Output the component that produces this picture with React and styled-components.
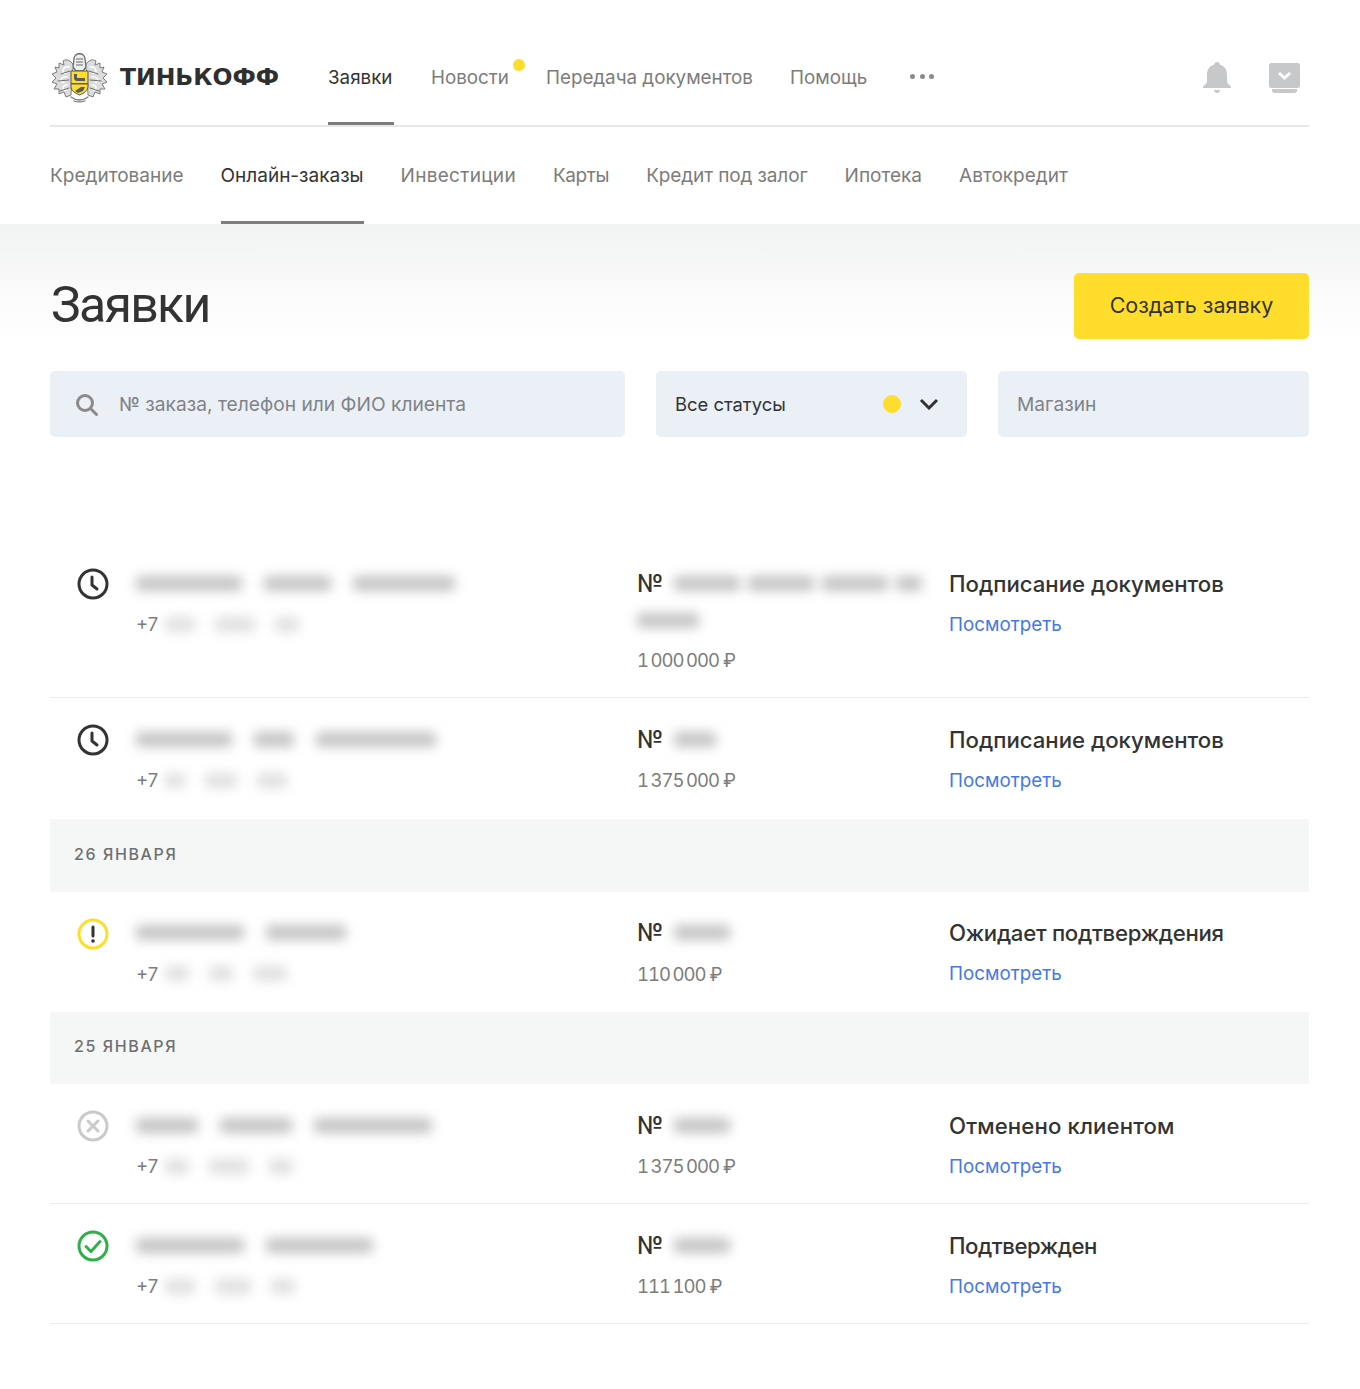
import React from 'react';
import styled, { createGlobalStyle } from 'styled-components';

const GlobalStyle = createGlobalStyle`
  body {
    margin: 0;
    background: #fff;
    font-family: Inter, "Liberation Sans", sans-serif;
    color: #333;
  }
  * { box-sizing: border-box; }
`;

const Page = styled.div`
  width: 1360px;
  height: 1389px;
  overflow: hidden;
  background: #fff;
`;

const Header = styled.header`
  padding: 28px 51px 0 50px;
  background: #fff;
`;

const TopBar = styled.div`
  display: flex;
  align-items: stretch;
  height: 99px;
  border-bottom: 2px solid #e7e8ea;
`;

const LogoBox = styled.a`
  display: flex;
  align-items: center;
  gap: 13px;
  width: 276px;
  margin: 0 0 -3px 2px;
  text-decoration: none;
`;

const Wordmark = styled.span`
  margin-bottom: 2px;
  font-family: "DejaVu Sans", sans-serif;
  font-weight: 700;
  font-size: 23.5px;
  color: #2f2f2f;
  white-space: nowrap;
`;

const Tabs = styled.nav`
  display: flex;
  gap: 37px;
`;

const Tab = styled.a`
  position: relative;
  display: flex;
  align-items: center;
  min-width: ${p => p.$min || '0'};
  padding-top: ${p => p.$top || '2px'};
  font-size: ${p => p.$size || '19px'};
  letter-spacing: ${p => p.$spacing || '0'};
  color: ${p => (p.$active ? '#333' : '#7c7c7c')};
  border-bottom: 3px solid ${p => (p.$active ? '#7d7d7d' : 'transparent')};
  white-space: nowrap;
`;

const TopTab = styled(Tab).attrs({ $top: '4px', $size: '18.8px' })``;

const Dot = styled.span`
  position: absolute;
  top: 31px;
  right: -16px;
  width: 12px;
  height: 12px;
  border-radius: 50%;
  background: #ffdd2d;
`;

const More = styled.span`
  display: flex;
  gap: 4.5px;
  align-items: center;
  margin: 0 0 1px 6px;
`;

const MoreDot = styled.i`
  width: 5px;
  height: 5px;
  border-radius: 50%;
  background: #8a8a8a;
`;

const HeadIcons = styled.div`
  display: flex;
  align-items: center;
  gap: 37px;
  margin-left: auto;
  padding: 2px 9px 0 0;
`;

const SubBar = styled.div`
  display: flex;
  height: 97px;
`;

const Hero = styled.section`
  padding: 49px 51px 0 50px;
  background: linear-gradient(#f1f2f2 0, #fbfbfb 70px, #fff 120px);
`;

const TitleRow = styled.div`
  display: flex;
  align-items: center;
  justify-content: space-between;
`;

const Title = styled.h1`
  margin: -3px 0 0 1px;
  font-family: Roboto, sans-serif;
  font-size: 50px;
  font-weight: 400;
  letter-spacing: -1.7px;
  color: #333;
`;

const CreateButton = styled.button`
  width: 235px;
  height: 66px;
  padding: 0 0 3px;
  border: 0;
  border-radius: 5px;
  background: #ffdd2d;
  color: #333;
  font: 400 21.5px Inter, sans-serif;
`;

const Filters = styled.div`
  display: grid;
  grid-template-columns: 575px 311px 311px;
  gap: 31px;
  margin-top: 32px;
`;

const Field = styled.div`
  display: flex;
  align-items: center;
  height: 66px;
  padding: ${p => p.$padding || '0 19px'};
  gap: ${p => p.$gap || '0'};
  border-radius: 5px;
  background: #ebf0f7;
  font-size: ${p => (p.$filled ? '18.4px' : '19.2px')};
  color: ${p => (p.$filled ? '#333' : '#7f8389')};
`;

const StatusDot = styled.span`
  width: 18px;
  height: 18px;
  margin-left: auto;
  margin-right: 18px;
  border-radius: 50%;
  background: #ffdd2d;
`;

const List = styled.div`
  margin: 105px 51px 0 50px;
`;

const Row = styled.div`
  display: grid;
  grid-template-columns: 86px 501px 312px 1fr;
  padding: 28px 0 ${p => (p.$tall ? '26px' : p.$divided ? '24px' : '25px')};
  border-bottom: ${p => (p.$divided ? '1px solid #e9ecee' : '0')};
`;

const IconCell = styled.div`
  padding-left: 27px;
  margin-top: -2px;
`;

const Line = styled.div`
  display: flex;
  align-items: center;
  height: 26px;
`;

const Sub = styled(Line)`
  margin-top: ${p => p.$top || '15px'};
  font-size: 18.5px;
  color: #7c7c7c;
`;

const Sum = styled(Sub)`
  font-variant-numeric: tabular-nums;
  letter-spacing: -1px;
  word-spacing: -1.5px;
`;

const Currency = styled.span`
  margin-left: 4px;
`;

const Strong = styled(Line)`
  font-size: 22.2px;
  font-weight: 500;
  letter-spacing: ${p => p.$spacing || '0'};
  color: #333;
  white-space: nowrap;
`;

const NumberSign = styled.span`
  width: 27px;
  font-size: 24px;
`;

const Blur = styled.span`
  display: flex;
  gap: ${p => p.$gap || '22px'};
  margin-left: ${p => p.$left || '0'};
  filter: blur(6px);
`;

const Blob = styled.i`
  display: block;
  width: ${p => p.$w}px;
  height: 15px;
  border-radius: 4px;
  background: ${p => p.$color || '#c4c4c4'};
`;

const Link = styled.a`
  font-size: 18.8px;
  color: #4379e6;
`;

const DateBar = styled.div`
  display: flex;
  align-items: center;
  height: 72.5px;
  padding: 0 0 3px 24px;
  background: #f5f7f7;
  font-size: 16px;
  font-weight: 500;
  letter-spacing: 1.6px;
  color: #6f7073;
`;

const Bell = () => (
  <svg width="30" height="33" viewBox="0 0 30 33" fill="#c6c8ca">
    <path d="M15 1c1.600 0 2.600 1 2.800 2.600C22.600 5 25 9 25 14v6c0 2 1.500 3.500 4 5.500V27H1v-1.500C3.500 23.500 5 22 5 20v-6c0-5 2.400-9 7.200-10.400C12.400 2 13.400 1 15 1z" />
    <path d="M12 29h6c0 1.800-1.300 3-3 3s-3-1.200-3-3z" />
  </svg>
);

const Inbox = () => (
  <svg width="31" height="30" viewBox="0 0 31 30">
    <rect x="0" y="0" width="31" height="25" rx="2.500" fill="#c6c8ca" />
    <path d="M3 26h25v1.500c0 1.200-1 2.500-2.500 2.500h-20C4 30 3 28.700 3 27.500z" fill="#c6c8ca" />
    <path d="M10 10l5.500 5 5.500-5" fill="none" stroke="#fff" strokeWidth="3" />
  </svg>
);

const SearchIcon = () => (
  <svg width="23" height="23" viewBox="0 0 23 23" fill="none" stroke="#8a8a8a" strokeWidth="3">
    <circle cx="10" cy="10" r="7.500" />
    <path d="M15.500 15.500l6 6" strokeLinecap="round" />
  </svg>
);

const Chevron = () => (
  <svg width="20" height="12" viewBox="0 0 20 12" fill="none" stroke="#333" strokeWidth="3">
    <path d="M2 2l8 8 8-8" />
  </svg>
);

const Mantling = () => (
  <>
    <path
      d="M22 13C18 6 14 6 11 8l1 4-5-2v5l-4-1 2 5-5 2 4 4-4 4 5 2-3 5h5v5l5-2 2 5 5-2 1-23z"
      fill="#dcdcdc"
      stroke="#7c7c7c"
      strokeWidth="1"
      strokeLinejoin="round"
    />
    <path d="M17 14c-3-1-6 1-6 4 0 2 2 3 3 2M15 24c-3-1-6 1-6 3s2 3 3 2M15 32c-2 0-4 1-4 3s2 3 3 2" fill="none" stroke="#fff" strokeWidth="1.500" strokeLinecap="round" />
    <path d="M18 18l-9 3M17 27l-11 1M17 35l-9 3" fill="none" stroke="#6f6f6f" strokeWidth="1" strokeLinecap="round" />
  </>
);

const Crest = () => (
  <svg width="55" height="50" viewBox="0 0 55 50">
    <Mantling />
    <g transform="matrix(-1 0 0 1 55 0)">
      <Mantling />
    </g>
    <path d="M22 6c0-7 11-7 11 0l1 8-3 4h-7l-3-4z" fill="#eee" stroke="#6a6a6a" strokeWidth="1.300" />
    <path d="M24 6h7M24 9h7M24 12h7" stroke="#6a6a6a" strokeWidth="1" />
    <path d="M19 18h17v15c0 5-4 7-8.500 9-4.500-2-8.500-4-8.500-9z" fill="#ffdd2d" stroke="#555" strokeWidth="1" />
    <path d="M22 21h3v4h8v3h-9l-2-2zM19 30h17v1.500H19zM23 38l6-4h4l-2 4-5 2z" fill="#5c5c5c" />
    <path d="M19 44c5 4 12 4 17 0M22 48c3 1 8 1 11 0" fill="none" stroke="#7c7c7c" strokeWidth="1.300" strokeLinecap="round" />
  </svg>
);

const StatusIcon = ({ kind }) => {
  const color = { wait: '#333', warn: '#ffdd2d', cancel: '#c9cacb', done: '#2fb04a' }[kind];
  return (
    <svg width="32" height="32" viewBox="0 0 32 32" fill="none">
      <circle cx="16" cy="16" r="14" stroke={color} strokeWidth="3" />
      {kind === 'wait' && <path d="M15 9v8l5 4" stroke="#333" strokeWidth="3" strokeLinecap="round" strokeLinejoin="round" />}
      {kind === 'warn' && (
        <>
          <path d="M16 9v9" stroke="#333" strokeWidth="3" strokeLinecap="round" />
          <circle cx="16" cy="23" r="1.800" fill="#333" />
        </>
      )}
      {kind === 'cancel' && <path d="M11 11l10 10M21 11L11 21" stroke="#c9cacb" strokeWidth="3" strokeLinecap="round" />}
      {kind === 'done' && <path d="M9 16.500l5 5 9-10" stroke="#2fb04a" strokeWidth="3" strokeLinecap="round" strokeLinejoin="round" />}
    </svg>
  );
};

const items = [
  { id: 1, kind: 'wait', name: [106, 67, 102], phone: [30, 40, 24], num: [66, 66, 66, 26], extra: 62, sum: '1 000 000', status: 'Подписание документов', divided: true },
  { id: 2, kind: 'wait', name: [96, 40, 120], phone: [20, 32, 30], num: [42], sum: '1 375 000', status: 'Подписание документов', tall: true },
  { date: '26 ЯНВАРЯ' },
  { id: 3, kind: 'warn', name: [108, 80], phone: [24, 24, 34], num: [56], sum: '110 000', status: 'Ожидает подтверждения', spacing: '-0.28px' },
  { date: '25 ЯНВАРЯ' },
  { id: 4, kind: 'cancel', name: [62, 72, 118], phone: [24, 40, 24], num: [56], sum: '1 375 000', status: 'Отменено клиентом', spacing: '0.12px', divided: true },
  { id: 5, kind: 'done', name: [108, 107], phone: [30, 36, 24], num: [56], sum: '111 100', status: 'Подтвержден', spacing: '-0.45px', divided: true },
];

export default function App() {
  return (
    <Page>
      <GlobalStyle />
      <Header>
        <TopBar>
          <LogoBox>
            <Crest />
            <Wordmark>ТИНЬКОФФ</Wordmark>
          </LogoBox>
          <Tabs>
            <TopTab $active $min="66px">Заявки</TopTab>
            <TopTab>Новости<Dot /></TopTab>
            <TopTab>Передача документов</TopTab>
            <TopTab>Помощь</TopTab>
            <More><MoreDot /><MoreDot /><MoreDot /></More>
          </Tabs>
          <HeadIcons>
            <Bell />
            <Inbox />
          </HeadIcons>
        </TopBar>
        <SubBar>
          <Tabs>
            <Tab>Кредитование</Tab>
            <Tab $active>Онлайн-заказы</Tab>
            <Tab $spacing="0.3px">Инвестиции</Tab>
            <Tab $spacing="-0.4px">Карты</Tab>
            <Tab $spacing="-0.12px">Кредит под залог</Tab>
            <Tab>Ипотека</Tab>
            <Tab>Автокредит</Tab>
          </Tabs>
        </SubBar>
      </Header>
      <Hero>
        <TitleRow>
          <Title>Заявки</Title>
          <CreateButton>Создать заявку</CreateButton>
        </TitleRow>
        <Filters>
          <Field $padding="0 25px" $gap="21px">
            <SearchIcon />
            № заказа, телефон или ФИО клиента
          </Field>
          <Field $filled $padding="0 28px 0 19px">
            Все статусы
            <StatusDot />
            <Chevron />
          </Field>
          <Field>Магазин</Field>
        </Filters>
      </Hero>
      <List>
        {items.map(item =>
          item.date ? (
            <DateBar key={item.date}>{item.date}</DateBar>
          ) : (
            <Row key={item.id} $divided={item.divided} $tall={item.tall}>
              <IconCell><StatusIcon kind={item.kind} /></IconCell>
              <div>
                <Line>
                  <Blur>{item.name.map((w, i) => <Blob key={i} $w={w} />)}</Blur>
                </Line>
                <Sub>
                  +7
                  <Blur $left="7px" $gap="20px">{item.phone.map((w, i) => <Blob key={i} $w={w} $color="#e0e0e0" />)}</Blur>
                </Sub>
              </div>
              <div>
                <Strong>
                  <NumberSign>№</NumberSign>
                  <Blur $left="10px" $gap="8px">{item.num.map((w, i) => <Blob key={i} $w={w} />)}</Blur>
                </Strong>
                {item.extra && (
                  <Sub $top="11px">
                    <Blur><Blob $w={item.extra} /></Blur>
                  </Sub>
                )}
                <Sum $top={item.extra ? '14px' : '15px'}>{item.sum}<Currency>₽</Currency></Sum>
              </div>
              <div>
                <Strong $spacing={item.spacing}>{item.status}</Strong>
                <Sub><Link>Посмотреть</Link></Sub>
              </div>
            </Row>
          )
        )}
      </List>
    </Page>
  );
}
